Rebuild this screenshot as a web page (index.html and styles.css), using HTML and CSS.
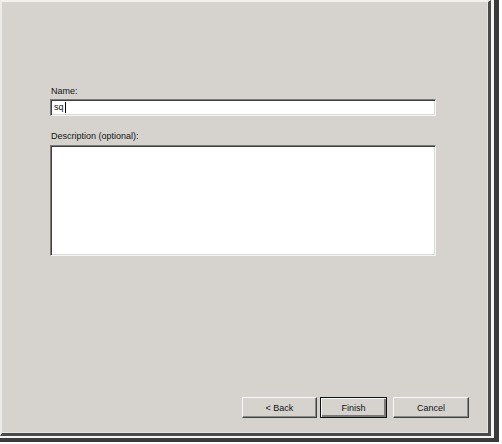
FILE: index.html
```html
<!DOCTYPE html>
<html lang="en">

<head>
    <meta charset="UTF-8">
    <title>New Item</title>
    <link rel="stylesheet" href="styles.css">
</head>

<body>

    <div class="frame">
        <div class="dialog">

            <div class="form">
                <label class="label" for="name">Name:</label>
                <div class="input">
                    <span class="value">sq</span><span class="caret"></span>
                </div>

                <label class="label label-desc" for="desc">Description (optional):</label>
                <div class="textarea"></div>
            </div>

            <div class="buttons">
                <button class="btn">&lt; Back</button>
                <button class="btn btn-default">Finish</button>
                <button class="btn btn-cancel">Cancel</button>
            </div>

        </div>
    </div>

</body>

</html>
```

FILE: styles.css
```css
body {
    margin: 0;
    background-color: #ffffff;
    font-family: "Liberation Sans", Arial, sans-serif;
    font-size: 9px;
    color: #111111;
}

.frame {
    width: 491px;
    height: 437px;
    padding-right: 3px;
    padding-bottom: 1px;
    border-right: 5px solid #3a3a3a;
    border-bottom: 4px solid #3a3a3a;
    background-color: #f4f4f4;
}

.dialog {
    display: flex;
    flex-direction: column;
    box-sizing: border-box;
    width: 491px;
    height: 436px;
    background-color: #d6d3cf;
    border-top: 2px solid #f2f1ee;
    border-left: 2px solid #ecebe8;
    border-right: 3px solid #4a4a4a;
    border-bottom: 3px solid #4a4a4a;
    box-shadow: inset -1px -1px 0 #e6e4e0;
}

.form {
    display: flex;
    flex-direction: column;
    width: 386px;
    padding-top: 84px;
    padding-left: 48px;
}

.label {
    display: block;
    height: 11px;
    line-height: 11px;
    padding-left: 1px;
    margin-bottom: 2px;
}

.label-desc {
    margin-top: 15px;
    margin-bottom: 3px;
}

.input,
.textarea {
    box-sizing: border-box;
    background-color: #ffffff;
    border-top: 1px solid #7a7a7a;
    border-left: 1px solid #7a7a7a;
    border-bottom: 1px solid #f6f6f6;
    border-right: 1px solid #f6f6f6;
    box-shadow: inset 1px 1px 0 #3e3e3e, inset -1px -1px 0 #dcdad6;
}

.input {
    display: flex;
    align-items: center;
    height: 17px;
    padding-left: 3px;
    font-size: 9px;
}

.value {
    line-height: 11px;
}

.caret {
    display: inline-block;
    width: 1px;
    height: 11px;
    margin-left: 1px;
    background-color: #000000;
}

.textarea {
    height: 111px;
}

.buttons {
    display: flex;
    justify-content: flex-end;
    gap: 3px;
    margin-top: auto;
    padding-right: 19px;
    padding-bottom: 15px;
}

.btn {
    box-sizing: border-box;
    width: 75px;
    height: 21px;
    padding: 0;
    margin: 0;
    font-family: "Liberation Sans", Arial, sans-serif;
    font-size: 9px;
    color: #111111;
    background-color: #d6d3cf;
    border-top: 1px solid #f8f8f8;
    border-left: 1px solid #f8f8f8;
    border-right: 1px solid #404040;
    border-bottom: 1px solid #404040;
    box-shadow: inset -1px -1px 0 #8a8a8a;
}

.btn-default {
    width: 67px;
    margin-right: 3px;
    border: 1px solid #111111;
    box-shadow: inset 1px 1px 0 #f8f8f8, inset -2px -2px 0 #7a7a7a;
}

.btn-cancel {
    width: 76px;
}
```
